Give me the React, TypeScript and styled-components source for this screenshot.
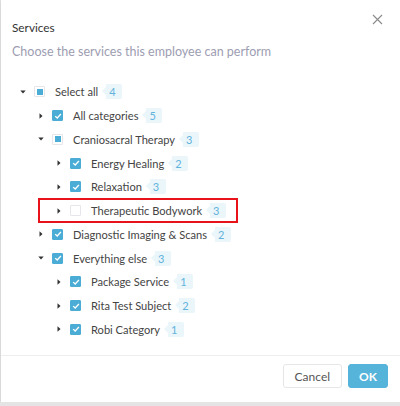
import React from "react";
import styled, { createGlobalStyle } from "styled-components";

const GlobalStyle = createGlobalStyle`
  html, body {
    margin: 0;
    padding: 0;
    background: #e4e4e4;
  }
  body {
    font-family: "Lato", "Noto Sans", sans-serif;
    -webkit-font-smoothing: antialiased;
  }
`;

type CheckState = "checked" | "partial" | "empty";

interface Node {
  label: string;
  count: number;
  level: number;
  state: CheckState;
  expanded: boolean;
  highlight?: boolean;
}

const TREE: Node[] = [
  { label: "Select all", count: 4, level: 0, state: "partial", expanded: true },
  { label: "All categories", count: 5, level: 1, state: "checked", expanded: false },
  { label: "Craniosacral Therapy", count: 3, level: 1, state: "partial", expanded: true },
  { label: "Energy Healing", count: 2, level: 2, state: "checked", expanded: false },
  { label: "Relaxation", count: 3, level: 2, state: "checked", expanded: false },
  { label: "Therapeutic Bodywork", count: 3, level: 2, state: "empty", expanded: false, highlight: true },
  { label: "Diagnostic Imaging & Scans", count: 2, level: 1, state: "checked", expanded: false },
  { label: "Everything else", count: 3, level: 1, state: "checked", expanded: true },
  { label: "Package Service", count: 1, level: 2, state: "checked", expanded: false },
  { label: "Rita Test Subject", count: 2, level: 2, state: "checked", expanded: false },
  { label: "Robi Category", count: 1, level: 2, state: "checked", expanded: false },
];

const Modal = styled.div`
  margin-left: 1px;
  height: 402px;
  background: #fff;
  display: flex;
  flex-direction: column;
  box-shadow: 0 1px 3px rgba(0, 0, 0, 0.12);
`;

const Header = styled.div`
  position: relative;
  padding: 20px 12px 0 11px;
`;

const Title = styled.h2`
  margin: 0;
  font-size: 11.8px;
  font-weight: 400;
  color: #333;
  line-height: 15px;
`;

const Subtitle = styled.p`
  margin: 9px 0 0;
  font-size: 12.5px;
  color: #9d9db2;
  line-height: 16px;
`;

const Close = styled.button`
  position: absolute;
  top: 14px;
  right: 17px;
  width: 11px;
  height: 11px;
  padding: 0;
  border: 0;
  background: none;
  display: flex;
`;

const Tree = styled.div`
  flex: 1;
  padding: 20px 0 0 17px;
  display: flex;
  flex-direction: column;
`;

const Row = styled.div<{ $level: number; $highlight?: boolean }>`
  position: relative;
  height: 23.75px;
  display: flex;
  align-items: center;
  padding-left: ${(p) => p.$level * 18}px;
  font-size: 11.1px;
  color: #444;

  ${(p) =>
    p.$highlight &&
    `
    &::before {
      content: "";
      box-sizing: border-box;
      position: absolute;
      left: 20px;
      top: -1px;
      width: 200px;
      height: 25px;
      border: 2px solid #e8121b;
    }
  `}
`;

const Toggle = styled.span`
  width: 10px;
  height: 10px;
  display: flex;
  align-items: center;
  justify-content: center;
  margin-right: 6px;
`;

const Box = styled.span<{ $state: CheckState }>`
  box-sizing: border-box;
  width: 11px;
  height: 11px;
  border-radius: 1px;
  display: flex;
  align-items: center;
  justify-content: center;
  margin-right: 10px;
  background: ${(p) => (p.$state === "checked" ? "#4badd5" : "#fff")};
  border: 1px solid ${(p) => (p.$state === "checked" ? "#4badd5" : "#e6e6ea")};
`;

const Dot = styled.span`
  width: 6px;
  height: 6px;
  background: #4badd5;
`;

const Label = styled.span`
  white-space: nowrap;
`;

const Badge = styled.span`
  position: relative;
  margin-left: 8px;
  height: 15px;
  min-width: 9px;
  padding: 0 4px 0 3px;
  background: #ebf6fb;
  color: #62b3dc;
  font-size: 11px;
  line-height: 15px;
  border-radius: 0 2px 2px 0;

  &::before {
    content: "";
    position: absolute;
    left: -4px;
    top: 3px;
    border-style: solid;
    border-width: 4.5px 4px 4.5px 0;
    border-color: transparent #ebf6fb transparent transparent;
  }
`;

const Footer = styled.div`
  border-top: 1px solid #eeeeee;
  height: 38px;
  display: flex;
  justify-content: flex-end;
  align-items: flex-start;
  gap: 6px;
  padding: 8px 12px 0 0;
`;

const Button = styled.button<{ $primary?: boolean }>`
  height: 24px;
  padding: 0 ${(p) => (p.$primary ? "10px" : "11px")};
  border-radius: 3px;
  font-family: "Lato", "Noto Sans", sans-serif;
  font-size: 12px;
  font-weight: ${(p) => (p.$primary ? 700 : 400)};
  color: ${(p) => (p.$primary ? "#fff" : "#555")};
  background: ${(p) => (p.$primary ? "#56b3d9" : "#fff")};
  border: 1px solid ${(p) => (p.$primary ? "#56b3d9" : "#e6e6e6")};
`;

const Arrow: React.FC<{ open: boolean }> = ({ open }) => (
  <svg width="6" height="6" viewBox="0 0 6 6">
    {open ? (
      <path d="M0.3 1.5 L5.7 1.5 L3 4.5 Z" fill="#333" />
    ) : (
      <path d="M1.5 0.3 L4.5 3 L1.5 5.7 Z" fill="#333" />
    )}
  </svg>
);

const Check: React.FC = () => (
  <svg width="8" height="8" viewBox="0 0 8 8">
    <path d="M1.2 4.1 L3.2 6 L6.9 2" fill="none" stroke="#fff" strokeWidth="1.3" />
  </svg>
);

const App: React.FC = () => {
  return (
    <>
      <GlobalStyle />
      <Modal>
        <Header>
          <Title>Services</Title>
          <Subtitle>Choose the services this employee can perform</Subtitle>
          <Close aria-label="Close">
            <svg width="11" height="11" viewBox="0 0 11 11">
              <path d="M1 1 L10 10 M10 1 L1 10" stroke="#8a8a8a" strokeWidth="1.1" />
            </svg>
          </Close>
        </Header>
        <Tree>
          {TREE.map((n) => (
            <Row key={n.label} $level={n.level} $highlight={n.highlight}>
              <Toggle>
                <Arrow open={n.expanded} />
              </Toggle>
              <Box $state={n.state}>
                {n.state === "checked" && <Check />}
                {n.state === "partial" && <Dot />}
              </Box>
              <Label>{n.label}</Label>
              <Badge>{n.count}</Badge>
            </Row>
          ))}
        </Tree>
        <Footer>
          <Button>Cancel</Button>
          <Button $primary>OK</Button>
        </Footer>
      </Modal>
    </>
  );
};

export default App;
